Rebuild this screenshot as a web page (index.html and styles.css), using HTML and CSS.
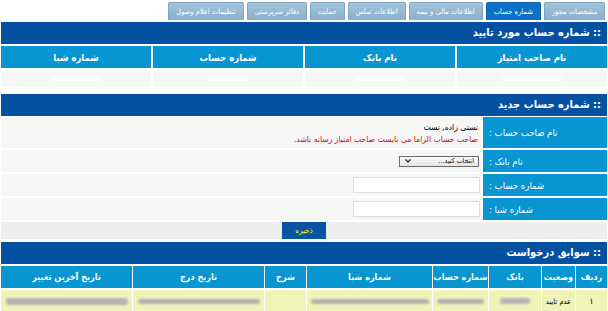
FILE: index.html
```html
<!DOCTYPE html>
<html lang="fa" dir="rtl">
<head>
<meta charset="utf-8">
<title>شماره حساب</title>
<link rel="stylesheet" href="styles.css">
</head>
<body>
<div class="page">
  <nav class="tabs">
    <a class="tab">مشخصات مجوز</a>
    <a class="tab active">شماره حساب</a>
    <a class="tab">اطلاعات مالی و بیمه</a>
    <a class="tab">اطلاعات تماس</a>
    <a class="tab">حمایت</a>
    <a class="tab">دفاتر سرپرستی</a>
    <a class="tab">تنظیمات اعلام وصول</a>
  </nav>

  <section class="section s1">
    <h2 class="head">:: شماره حساب مورد تایید</h2>
    <div class="grid g4">
      <div class="th">نام صاحب امتیاز</div>
      <div class="th">نام بانک</div>
      <div class="th">شماره حساب</div>
      <div class="th">شماره شبا</div>
      <div class="td light"><span class="blob white w60"></span></div>
      <div class="td light"><span class="blob white w50"></span></div>
      <div class="td light"><span class="blob white w40"></span></div>
      <div class="td light"><span class="blob white w50"></span></div>
    </div>
  </section>

  <section class="section s2">
    <h2 class="head">:: شماره حساب جدید</h2>
    <div class="form">
      <div class="label tall">نام صاحب حساب :</div>
      <div class="value tall">
        <div class="owner">تستی زاده, تست</div>
        <div class="warn">صاحب حساب الزاما می بایست صاحب امتیاز رسانه باشد.</div>
      </div>
      <div class="label">نام بانک :</div>
      <div class="value">
        <div class="select"><span>انتخاب کنید...</span><svg class="chev" width="6" height="4" viewBox="0 0 6 4"><path d="M0.5 0.5 L3 3 L5.5 0.5" fill="none" stroke="#222" stroke-width="1.2"/></svg></div>
      </div>
      <div class="label">شماره حساب :</div>
      <div class="value"><input class="input" type="text"></div>
      <div class="label">شماره شبا :</div>
      <div class="value"><input class="input" type="text"></div>
      <div class="actions"><button class="btn" type="button">ذخیره</button></div>
    </div>
  </section>

  <section class="section s3">
    <h2 class="head">:: سوابق درخواست</h2>
    <div class="grid g8">
      <div class="th">ردیف</div>
      <div class="th">وضعیت</div>
      <div class="th">بانک</div>
      <div class="th">شماره حساب</div>
      <div class="th">شماره شبا</div>
      <div class="th">شرح</div>
      <div class="th">تاریخ درج</div>
      <div class="th">تاریخ آخرین تغییر</div>
      <div class="td yel center">۱</div>
      <div class="td yel center small">عدم تایید</div>
      <div class="td yel center"><span class="blob gray b-bank"></span></div>
      <div class="td yel center"><span class="blob gray b-acc"></span></div>
      <div class="td yel center"><span class="blob gray b-sheba"></span></div>
      <div class="td yel"></div>
      <div class="td yel center"><span class="blob gray b-date"></span></div>
      <div class="td yel center"><span class="blob gray b-date2"></span></div>
    </div>
  </section>
</div>
</body>
</html>
```
FILE: styles.css
```css
* { box-sizing: border-box; }
html, body { margin: 0; padding: 0; background: #fff; }
body {
  font-family: "DejaVu Sans Condensed", "DejaVu Sans", sans-serif;
  font-size: 10px;
  color: #000;
}
.page { padding: 0 1px; }

.tabs {
  display: flex;
  gap: 3px;
  height: 18px;
  margin: 2px 2px 2px 0;
}
.tab {
  display: flex;
  align-items: center;
  justify-content: center;
  padding: 0 7px;
  font-size: 7.5px;
  color: #fff;
  background: linear-gradient(#a3c3da, #88b0cd);
  border: 1px solid #7ea7c6;
  border-bottom: none;
  border-radius: 2px 2px 0 0;
  white-space: nowrap;
}
.tab.active {
  background: #0d72c6;
  border-color: #0a63ad;
}

.head {
  margin: 0;
  height: 22px;
  line-height: 22px;
  padding: 0 6px;
  background: #0451a1;
  color: #fff;
  font-size: 11px;
  font-weight: bold;
}

.grid {
  display: grid;
  column-gap: 2px;
  row-gap: 2px;
  margin-top: 2px;
}
.g4 { grid-template-columns: repeat(4, 1fr); }
.g8 {
  grid-template-columns: 31px 33px 52px 55px 125px 41px 1fr 1fr;
  column-gap: 1px;
}
.th {
  height: 22px;
  display: flex;
  align-items: center;
  justify-content: center;
  background: #0896d2;
  color: #fff;
  font-weight: bold;
  font-size: 9.5px;
  white-space: nowrap;
}
.g8 .th { font-size: 9px; }
.td {
  display: flex;
  align-items: center;
  font-size: 9px;
}
.td.light { height: 17px; background: #f8f8f8; justify-content: center; }
.td.yel { height: 22px; background: #eff3b8; }
.center { justify-content: center; }
.small { font-size: 7.5px; white-space: nowrap; }

.blob { display: inline-block; height: 5px; border-radius: 3px; filter: blur(0.8px); }
.blob.white { background: #fff; }
.blob.gray { background: #b3b3b3; }
.w60 { width: 60px; }
.w50 { width: 50px; }
.w40 { width: 40px; }
.b-bank { width: 30px; height: 6px; }
.b-acc { width: 47px; }
.b-sheba { width: 118px; }
.b-date { width: 122px; }
.b-date2 { width: 122px; height: 7px; }

.s2 { margin-top: 7px; }
.s3 { margin-top: 3px; }

.form {
  display: grid;
  grid-template-columns: 124px 1fr;
  row-gap: 2px;
  column-gap: 2px;
  margin-top: 1px;
}
.label {
  height: 22px;
  display: flex;
  align-items: center;
  justify-content: flex-end;
  padding-left: 6px;
  background: #0896d2;
  color: #fff;
  font-size: 9.5px;
}
.value {
  height: 22px;
  display: flex;
  align-items: center;
  padding-right: 1px;
  background: #f6f6f6;
}
.label.tall, .value.tall { height: 31px; }
.value.tall {
  flex-direction: column;
  align-items: flex-start;
  justify-content: center;
  padding-right: 3px;
  gap: 2px;
}
.owner { font-size: 8.5px; color: #000; }
.warn { font-size: 8.5px; color: #d01010; }

.select {
  width: 80px;
  height: 11px;
  display: flex;
  align-items: center;
  justify-content: space-between;
  padding: 0 4px 0 5px;
  border: 1px solid #6c6c6c;
  background: linear-gradient(#fafafa, #e4e4e4);
  font-size: 7px;
  margin-right: 1px;
}
.chev { display: block; }

.input {
  width: 127px;
  height: 16px;
  border: 1px solid #dcdcdc;
  background: #fff;
  margin: 0;
  padding: 0 3px;
  outline: none;
}

.actions {
  grid-column: 1 / -1;
  height: 17px;
  background: #ededed;
  display: flex;
  justify-content: center;
  align-items: stretch;
}
.btn {
  width: 44px;
  margin: 0;
  padding: 0;
  border: none;
  background: #0a52a3;
  color: #ffff00;
  font-family: inherit;
  font-size: 8px;
}
```
